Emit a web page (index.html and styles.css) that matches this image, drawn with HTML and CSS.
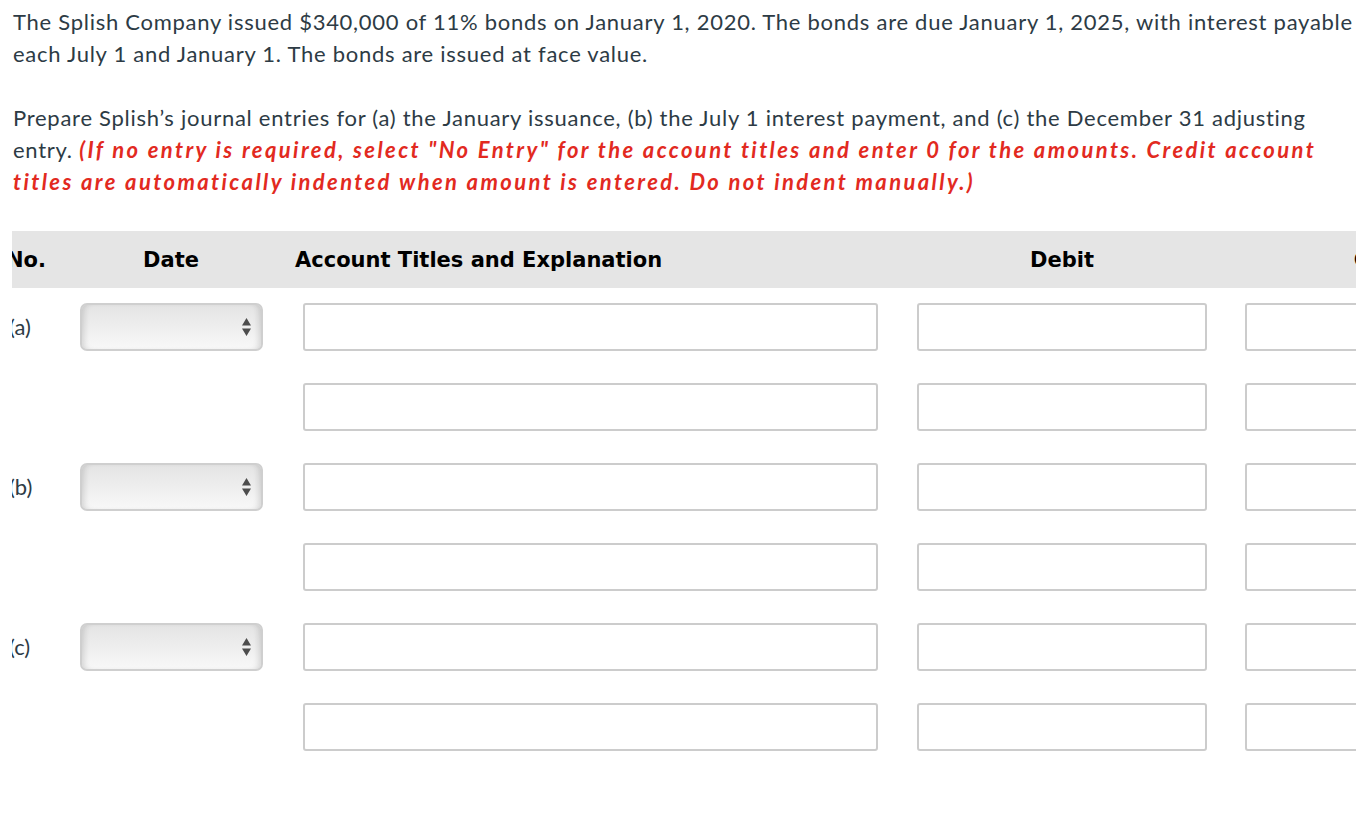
FILE: index.html
```html
<!DOCTYPE html>
<html lang="en">
<head>
<meta charset="utf-8">
<title>Splish Company bonds</title>
<link rel="stylesheet" href="styles.css">
</head>
<body>
<div class="page">
  <p class="para">The Splish Company issued $340,000 of 11% bonds on January 1, 2020. The bonds are due January 1, 2025, with interest payable each July 1 and January 1. The bonds are issued at face value.</p>
  <p class="para">Prepare Splish’s journal entries for (a) the January issuance, (b) the July 1 interest payment, and (c) the December 31 adjusting entry. <span class="note">(If no entry is required, select "No Entry" for the account titles and enter 0 for the amounts. Credit account titles are automatically indented when amount is entered. Do not indent manually.)</span></p>

  <div class="scroller">
    <div class="journal">
      <div class="hd hd-no">No.</div>
      <div class="hd hd-date">Date</div>
      <div class="hd hd-acct">Account Titles and Explanation</div>
      <div class="hd hd-debit">Debit</div>
      <div class="hd hd-credit">Credit</div>

      <div class="cell c-no">(a)</div>
      <div class="cell c-date"><div class="sel"><select aria-label="Date"></select><svg class="arrows" width="9" height="18" viewBox="0 0 9 18"><path d="M4.5 0 L9 7.5 L0 7.5 Z M0 10.5 L9 10.5 L4.5 18 Z" fill="#4d4d4d"/></svg></div></div>
      <div class="cell c-acct"><input class="inp acct" type="text"></div>
      <div class="cell c-debit"><input class="inp amt" type="text"></div>
      <div class="cell c-credit"><input class="inp amt" type="text"></div>

      <div class="cell c-no"></div>
      <div class="cell c-date"></div>
      <div class="cell c-acct"><input class="inp acct" type="text"></div>
      <div class="cell c-debit"><input class="inp amt" type="text"></div>
      <div class="cell c-credit"><input class="inp amt" type="text"></div>

      <div class="cell c-no">(b)</div>
      <div class="cell c-date"><div class="sel"><select aria-label="Date"></select><svg class="arrows" width="9" height="18" viewBox="0 0 9 18"><path d="M4.5 0 L9 7.5 L0 7.5 Z M0 10.5 L9 10.5 L4.5 18 Z" fill="#4d4d4d"/></svg></div></div>
      <div class="cell c-acct"><input class="inp acct" type="text"></div>
      <div class="cell c-debit"><input class="inp amt" type="text"></div>
      <div class="cell c-credit"><input class="inp amt" type="text"></div>

      <div class="cell c-no"></div>
      <div class="cell c-date"></div>
      <div class="cell c-acct"><input class="inp acct" type="text"></div>
      <div class="cell c-debit"><input class="inp amt" type="text"></div>
      <div class="cell c-credit"><input class="inp amt" type="text"></div>

      <div class="cell c-no">(c)</div>
      <div class="cell c-date"><div class="sel"><select aria-label="Date"></select><svg class="arrows" width="9" height="18" viewBox="0 0 9 18"><path d="M4.5 0 L9 7.5 L0 7.5 Z M0 10.5 L9 10.5 L4.5 18 Z" fill="#4d4d4d"/></svg></div></div>
      <div class="cell c-acct"><input class="inp acct" type="text"></div>
      <div class="cell c-debit"><input class="inp amt" type="text"></div>
      <div class="cell c-credit"><input class="inp amt" type="text"></div>

      <div class="cell c-no"></div>
      <div class="cell c-date"></div>
      <div class="cell c-acct"><input class="inp acct" type="text"></div>
      <div class="cell c-debit"><input class="inp amt" type="text"></div>
      <div class="cell c-credit"><input class="inp amt" type="text"></div>
    </div>
  </div>
</div>
</body>
</html>
```

FILE: styles.css
```css
html, body {
  margin: 0;
  padding: 0;
  background: #ffffff;
}

.page {
  padding: 6px 0 0 12px;
  width: 1344px;
  font-family: "Lato", "Noto Sans", sans-serif;
  font-size: 22px;
  line-height: 32px;
  color: #2d3b45;
}

.para {
  margin: 0 0 32px 1px;
  letter-spacing: 0.73px;
}

.note {
  color: #e22a1f;
  font-weight: bold;
  font-style: italic;
  letter-spacing: 2.4px;
}

.scroller {
  overflow: hidden;
  width: 1344px;
  margin-top: 33px;
}

.journal {
  margin-left: -7px;
  width: 1560px;
  display: grid;
  grid-template-columns: 65px 202px 626px 328px 328px;
  grid-auto-rows: 80px;
  grid-template-rows: 57px;
}

.hd {
  background: #e5e5e5;
  font-family: "DejaVu Sans", Verdana, sans-serif;
  font-weight: bold;
  font-size: 21px;
  color: #000;
  display: flex;
  align-items: center;
  justify-content: center;
}

.hd-no {
  justify-content: flex-start;
  padding-left: 1px;
}

.hd-acct {
  justify-content: flex-start;
  padding-left: 23px;
}

.cell {
  display: flex;
  align-items: flex-start;
  padding-top: 15px;
}

.c-no {
  padding-left: 4px;
  line-height: 48px;
  font-size: 22px;
}

.c-date {
  justify-content: center;
}

.c-acct {
  padding-left: 31px;
}

.c-debit, .c-credit {
  justify-content: center;
}

.inp {
  box-sizing: border-box;
  height: 48px;
  border: 2px solid #cccccc;
  border-radius: 3px;
  background: #fff;
  margin: 0;
  padding: 0 8px;
  font-family: "Lato", sans-serif;
  font-size: 18px;
}

.acct {
  width: 575px;
}

.amt {
  width: 290px;
}

.sel {
  position: relative;
  width: 183px;
  height: 48px;
}

.sel select {
  appearance: none;
  -webkit-appearance: none;
  box-sizing: border-box;
  width: 100%;
  height: 100%;
  margin: 0;
  border: 2px solid #cfcfcf;
  border-radius: 7px;
  background: linear-gradient(#e4e4e4, #f8f8f8);
  box-shadow: inset 6px 0 6px -4px rgba(0,0,0,0.14), inset -6px 0 6px -4px rgba(0,0,0,0.14);
}

.arrows {
  position: absolute;
  right: 12px;
  top: 15px;
}
```
